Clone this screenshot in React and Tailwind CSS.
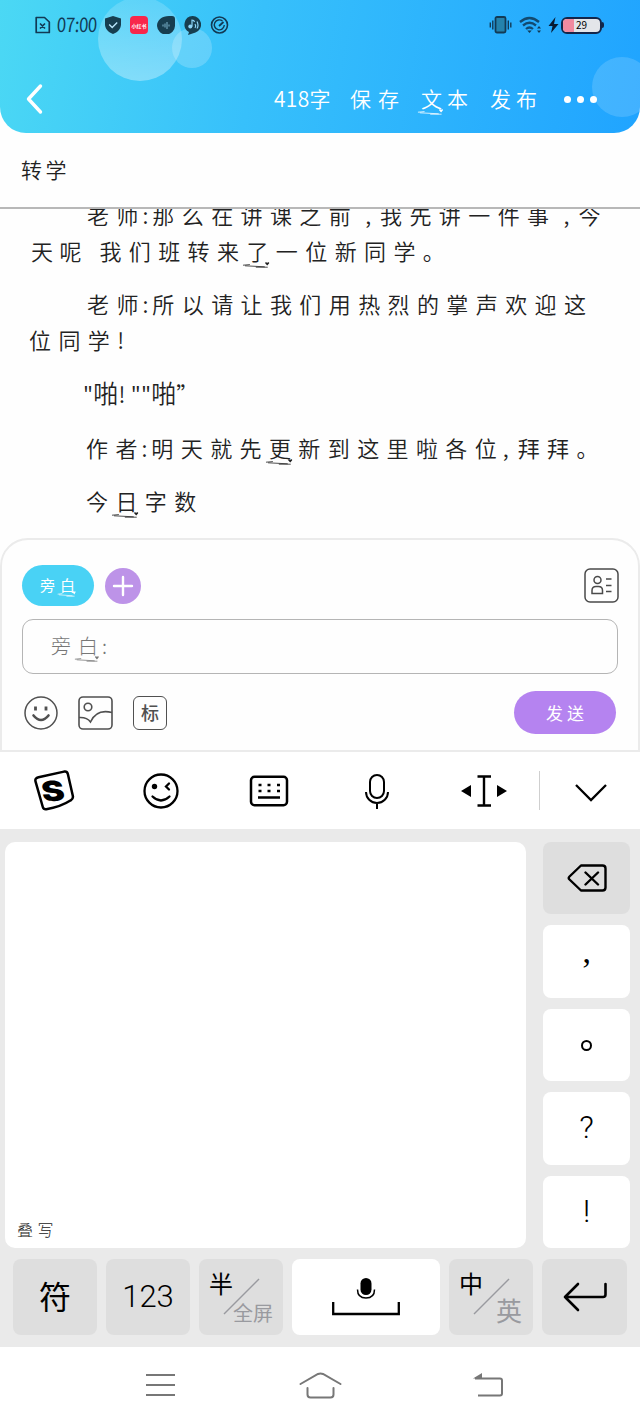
import React from 'react';

// little hand-drawn underline with a heart that some characters carry
const Marked = ({ children }) => (
    <span className="relative">
        {children}
        <svg className="absolute left-[-0.2em] bottom-[-2px] h-[8px] w-[1.35em]" viewBox="0 0 30 8" preserveAspectRatio="none" fill="none" stroke="currentColor">
            <path d="M1 5.2 8 4.6M3 5.8l20 1M14 7.2h12" strokeWidth="0.8" />
            <path d="M25.5 5.5 23.6 3.6c-.8-1.2.8-2 1.9-.8 1-1.2 2.6-.4 1.8.8z" fill="currentColor" stroke="none" />
        </svg>
    </span>
);

const StatusBar = () => (
    <div className="flex h-[50px] items-center justify-between pl-[35px] pr-[36px] text-[#123a55]">
        <div className="flex items-center">
            <svg className="mr-[6px] h-[20px] w-[16px]" viewBox="0 0 16 20" fill="none" stroke="currentColor" strokeWidth="1.7">
                <path d="M1.2 2.5h8.3L14.3 7v10.5H1.2zM5 8.5l5 5M10 8.5l-5 5" strokeLinejoin="round" />
            </svg>
            <span className="relative -top-[1px] w-[41px] -skew-x-3 text-[20px] leading-none tracking-[-0.500px] whitespace-nowrap"><span className="inline-block origin-left scale-x-[0.84]">07:00</span></span>
            <svg className="ml-[7px] h-[18px] w-[16px]" viewBox="0 0 16 18">
                <path d="M8 0l8 2.6v6C16 13 12.500 16.500 8 18 3.500 16.500 0 13 0 8.600v-6z" fill="#173e50" />
                <path d="M4.200 8.500l3 3 5-5" fill="none" stroke="#b9e5fa" strokeWidth="1.400" />
            </svg>
            <span className="ml-[9px] flex h-[18px] w-[18px] items-center justify-center rounded-[4px] bg-[#f8264a] text-[5px] leading-none font-bold whitespace-nowrap text-white">小红书</span>
            <svg className="ml-[9px] h-[18px] w-[18px]" viewBox="0 0 18 18">
                <path d="M0 10C0 4 5 0 12 0h3q3 0 3 3v6a9 9 0 0 1-18 1z" fill="#173e50" />
                <path d="M6 8.500v2M8 7.500v4M10 6v7M12 8.500v2" stroke="#7fb6cf" strokeWidth="1" />
            </svg>
            <svg className="ml-[9px] h-[19px] w-[17px]" viewBox="0 0 17 19">
                <path d="M8.500 0a8.500 8.500 0 0 1 3 16.500L4 19l1-3A8.500 8.500 0 0 1 8.500 0z" fill="#173e50" />
                <circle cx="6.300" cy="10.500" r="2" fill="#8ed5f8" />
                <path d="M8 10.500V4q2 0 2.500 2M11 8q1.500 2 0 4M13 5.500q2 4 0 7" fill="none" stroke="#8ed5f8" strokeWidth="1.200" />
            </svg>
            <svg className="ml-[9px] h-[18px] w-[19px]" viewBox="0 0 19 18" fill="none" stroke="currentColor">
                <circle cx="9.500" cy="9" r="8" strokeWidth="1.600" />
                <path d="M12.500 5A5 5 0 1 0 14.300 9" strokeWidth="1.400" />
                <path d="M9 10l4.500-4" strokeWidth="1.800" />
            </svg>
        </div>
        <div className="flex items-center">
            <svg className="h-[18px] w-[23px]" viewBox="0 0 23 18" fill="none" stroke="currentColor" strokeWidth="1.400">
                <rect x="6.500" y="1" width="10" height="15.500" rx="1.500" fill="#2482ac" strokeWidth="1.800" />
                <path d="M3.800 4.500v9M1.300 6.500v5M19.300 4.500v9M21.800 6.500v5" />
            </svg>
            <svg className="ml-[7px] h-[18px] w-[23px]" viewBox="0 0 23 18" fill="none" stroke="#124a70" strokeWidth="2.300">
                <path d="M1 6q9.500-8 19 0M4 9.500q6.500-5.500 13 0M7 13q3.500-3 7 0" />
                <path d="M8.300 14.500h4.400L10.500 17z" fill="currentColor" stroke="none" />
                <path d="M18 12.500h4l-2-2.500zM18 14.500h4L20 17z" fill="currentColor" stroke="none" />
            </svg>
            <svg className="ml-[6px] h-[18px] w-[11px]" viewBox="0 0 11 18" fill="#071a33">
                <path d="M7.500 1L.5 10h4L3 17l7.500-9H6z" />
            </svg>
            <div className="ml-[2px] flex items-center">
                <div className="relative flex h-[17px] w-[41px] items-center justify-center overflow-hidden rounded-[6px] border-2 border-[#13264a] bg-[#e3e5e9]">
                    <div className="absolute inset-y-0 left-0 w-[11px] bg-[#f08aa0]" />
                    <span className="relative text-[10px] leading-none text-black">29</span>
                </div>
                <div className="h-[6px] w-[2px] rounded-r bg-[#13264a]" />
            </div>
        </div>
    </div>
);

const Header = () => (
    <header className="relative h-[133px] overflow-hidden rounded-b-[26px] bg-[linear-gradient(100deg,#4bd8f4_0%,#37c0fb_40%,#20a4ff_100%)]">
        <div className="absolute top-[-3px] left-[98px] h-[84px] w-[84px] rounded-full bg-linear-to-b from-white/15 to-white/35" />
        <div className="absolute top-[28px] left-[172px] h-[40px] w-[40px] rounded-full bg-white/20" />
        <div className="absolute top-[57px] left-[592px] h-[60px] w-[60px] rounded-full bg-white/15" />
        <div className="relative">
            <StatusBar />
            <div className="flex h-[98px] items-center pl-[26px] text-[21px] text-white">
                <svg className="h-[32px] w-[18px]" viewBox="0 0 18 32" fill="none" stroke="white" strokeWidth="3.400" strokeLinecap="round" strokeLinejoin="round">
                    <path d="M14.500 3L2.500 16l12 13" />
                </svg>
                <nav className="ml-[230px] flex items-center font-[350] whitespace-nowrap">
                    <span className="w-[76px] tracking-[0.300px]">418字</span>
                    <span className="w-[71px] tracking-[7px]">保存</span>
                    <span className="w-[69px] tracking-[5px]"><Marked>文</Marked>本</span>
                    <span className="w-[74px] tracking-[5px]">发布</span>
                </nav>
                <div className="flex gap-[6px]">
                    <i className="h-[7px] w-[7px] rounded-full bg-white" />
                    <i className="h-[7px] w-[7px] rounded-full bg-white" />
                    <i className="h-[7px] w-[7px] rounded-full bg-white" />
                </div>
            </div>
        </div>
    </header>
);

const Comma = () => <span className="pl-[7px] tracking-[9px]">,</span>;
// last character of a speaker's name with its colon, set tighter than the line
const Tight = ({ children }) => <span className="tracking-[4px]">{children}</span>;

const Story = () => (
    <section className="h-[329px] overflow-hidden pl-[31px] text-[22px] leading-[36px] font-[350] tracking-[7.400px] whitespace-nowrap text-[#222]">
        <div className="-mt-[13px]">
            <p className="pl-[56px]">老<Tight>师:</Tight>那么在讲课之前<Comma />我先讲一件事<Comma />今</p>
            <p><span className="tracking-[6.500px]">天呢 </span>我们班转来<Marked>了</Marked>一位新同学。</p>
        </div>
        <div className="mt-[17px]">
            <p className="pl-[56px]">老<Tight>师:</Tight>所以请让我们用热烈的掌声欢迎这</p>
            <p className="-ml-[2px]">位同学!</p>
        </div>
        <p className="mt-[17px] pl-[52px] tracking-[0.200px]">"<span className="text-[25px]">啪</span>! ""<span className="text-[25px]">啪</span>”</p>
        <p className="mt-[18px] pl-[55px]">作<Tight>者:</Tight>明天就先<Marked>更</Marked>新到这里啦各<span className="tracking-[6px]">位</span><span className="tracking-[9px]">,</span>拜拜。</p>
        <p className="mt-[17px] pl-[55px]">今<Marked>日</Marked>字数</p>
    </section>
);

const Composer = () => (
    <section className="h-[214px] rounded-t-[28px] border-2 border-[#ebebeb] px-[20px] pt-[25px]">
        <div className="flex items-center justify-between">
            <div className="flex items-center gap-[11px]">
                <button className="h-[41px] w-[72px] rounded-full bg-[#49d2f5] pl-[4px] text-[15px] tracking-[5px] text-white">旁<Marked>白</Marked></button>
                <button className="flex h-[36px] w-[36px] items-center justify-center rounded-full bg-[#bd93e8]">
                    <svg className="h-[22px] w-[22px]" viewBox="0 0 22 22" stroke="white" strokeWidth="2.400" strokeLinecap="round"><path d="M11 2v18M2 11h18" /></svg>
                </button>
            </div>
            <svg className="-mr-[1px] h-[35px] w-[35px]" viewBox="0 0 35 35" fill="none" stroke="#4a4a4a" strokeWidth="1.500">
                <rect x="1" y="1" width="33" height="33" rx="5" />
                <circle cx="13.500" cy="12" r="3.500" />
                <path d="M8 25.500v-3q0-4 4-4h2.500q4 0 4 4v3zM22 11h5.500M22 17.500h5.500M22 23.500h5.500" />
            </svg>
        </div>
        <div className="mt-[13px] flex h-[55px] items-center rounded-[11px] border border-[#b5b5b5] pb-[2px] pl-[28px] text-[20px] font-light tracking-[7px] text-[#777]">旁<span className="tracking-[4px]"><Marked>白</Marked></span>:</div>
        <div className="mt-[17px] flex items-center">
            <svg className="ml-[2px] h-[34px] w-[34px]" viewBox="0 0 34 34" fill="none" stroke="#505050" strokeWidth="1.500">
                <circle cx="17" cy="17" r="16" />
                <path d="M11.500 10.500v4M22 10.500v4" strokeWidth="2.800" />
                <path d="M9.500 19.500q7.500 9 15 0" strokeWidth="2.600" strokeLinecap="round" />
            </svg>
            <svg className="ml-[20px] h-[34px] w-[35px]" viewBox="0 0 35 34" fill="none" stroke="#505050" strokeWidth="1.600">
                <rect x="1" y="1" width="33" height="32" rx="4" />
                <circle cx="10" cy="11" r="3.800" />
                <path d="M1 21.500q8-.5 11.500 4.500 6-13.500 21.500-9.500" />
            </svg>
            <span className="ml-[20px] flex h-[34px] w-[34px] items-center justify-center rounded-[6px] border-[1.500px] border-[#505050] pb-[2px] text-[18px] leading-none font-medium text-[#505050]">标</span>
            <button className="mr-[2px] ml-auto h-[43px] w-[102px] rounded-full bg-[#b583f0] pl-[4px] text-[17px] tracking-[4px] text-white">发送</button>
        </div>
    </section>
);

const InputToolbar = () => (
    <div className="flex h-[77px] items-center bg-white">
        <div className="grid w-[538px] grid-cols-5 items-center justify-items-center">
            <svg className="h-[42px] w-[42px]" viewBox="0 0 42 42">
                <path d="M5.500 7.300L31 1.600q3-.6 3.800 2.200l5 22q.7 3-2 4.500-10 6.500-24.500 9-2.700.4-3.500-2.300L2.500 11.300q-.8-3 3-4z" fill="none" stroke="black" strokeWidth="2.500" />
                <text x="0" y="0" transform="translate(21.500 31) rotate(-4) skewX(6) scale(1.220 1)" textAnchor="middle" fontFamily="Inter" fontWeight="900" fontSize="28">S</text>
            </svg>
            <svg className="h-[36px] w-[36px]" viewBox="0 0 36 36" fill="none" stroke="black" strokeWidth="2.300" strokeLinecap="round">
                <circle cx="18" cy="18" r="16.500" />
                <circle cx="11.500" cy="13.500" r="2.700" fill="black" stroke="none" />
                <path d="M26 10.500l-3 3 3 3M9.500 23.500q8.500 8 17 0" />
            </svg>
            <svg className="h-[32px] w-[40px]" viewBox="0 0 40 32" fill="none" stroke="black" strokeWidth="2.500">
                <rect x="2" y="1.800" width="36" height="28.400" rx="3.500" />
                <path d="M9.500 10h3M18.500 10h3M28 10h3M9.500 16h3M18.500 16h3M28 16h3M9 22.500h22" />
            </svg>
            <svg className="h-[36px] w-[26px]" viewBox="0 0 26 36" fill="none" stroke="black" strokeWidth="2">
                <rect x="6" y="2" width="14" height="23" rx="7" />
                <path d="M2 19a11 11 0 0 0 22 0M13 30v6" />
            </svg>
            <svg className="h-[32px] w-[46px]" viewBox="0 0 46 32">
                <path d="M0 16l10-6v12zM46 16l-10-6v12z" />
                <path d="M16.500 1.500h13.500M16.500 30.500h13.500M23 1.500v29" stroke="black" strokeWidth="2.400" />
            </svg>
        </div>
        <div className="ml-px h-[39px] w-px bg-[#cfcfcf]" />
        <svg className="ml-[35px] mt-[4px] h-[18px] w-[32px]" viewBox="0 0 32 18" fill="none" stroke="black" strokeWidth="2.300">
            <path d="M1 1l15 15L31 1" />
        </svg>
    </div>
);

const sideKeys = [
    { label: '’', className: "pt-[16px] font-['Liberation_Serif'] text-[34px]" },
    { label: '○', className: '' },
    { label: '?', className: 'pb-[2px] font-[350] text-[32px]' },
    { label: '!', className: 'pb-[2px] font-[350] text-[32px]' },
];

const SplitKey = ({ top, bottom }) => (
    <div className="relative h-[76px] w-[84px] rounded-[8px] bg-[#dedede]">
        <svg className="absolute top-[19px] left-[24px] h-[37px] w-[37px]" viewBox="0 0 37 37" stroke="#999a9f" strokeWidth="1.500"><path d="M1 36L36 1" /></svg>
        <span className="absolute top-[12px] left-[10px] text-[24px] leading-none">{top}</span>
        <span className={bottom.length > 1 ? 'absolute right-[10px] bottom-[12px] text-[20px] leading-none text-[#999a9f]' : 'absolute right-[11px] bottom-[12px] text-[26px] leading-none text-[#999a9f]'}>{bottom}</span>
    </div>
);

const Keyboard = () => (
    <div className="h-[518px] bg-[#eaeaea] pt-[13px]">
        <div className="flex h-[406px] gap-[17px] pl-[5px]">
            <div className="flex w-[521px] items-end rounded-[10px] bg-white pb-[9px] pl-[12px] text-[16px] leading-[20px] font-light tracking-[4.500px] text-[#222]">叠写</div>
            <div className="flex w-[87px] flex-col gap-[11px]">
                <div className="flex flex-1 items-center justify-center rounded-[8px] bg-[#dedede]">
                    <svg className="h-[28px] w-[40px]" viewBox="0 0 40 28" fill="none" stroke="black" strokeWidth="2.400" strokeLinejoin="round" strokeLinecap="round">
                        <path d="M14 1.500h21.500q3 0 3 3v19q0 3-3 3H14L2.500 15.500q-1.500-1.500 0-3zM18.500 8.500L31 20.500M31 8.500L18.500 20.500" />
                    </svg>
                </div>
                {sideKeys.map((key) => (
                    <div key={key.label} className="flex flex-1 items-center justify-center rounded-[8px] bg-white font-[Roboto,sans-serif]">
                        {key.label === '○'
                            ? <i className="h-[11px] w-[11px] rounded-full border-2 border-black" />
                            : <span className={key.className + ' leading-none'}>{key.label}</span>}
                    </div>
                ))}
            </div>
        </div>
        <div className="mt-[11px] flex gap-[9px] pl-[13px]">
            <div className="flex h-[76px] w-[84px] items-center justify-center rounded-[8px] bg-[#dedede] pb-[4px] text-[32px]">符</div>
            <div className="flex h-[76px] w-[84px] items-center justify-center rounded-[8px] bg-[#dedede] font-[Roboto,sans-serif] text-[31px] font-[350]">123</div>
            <SplitKey top="半" bottom="全屏" />
            <div className="flex h-[76px] w-[148px] justify-center rounded-[8px] bg-white pt-[18px]">
                <svg className="h-[40px] w-[68px]" viewBox="0 0 68 40" fill="none" stroke="black" strokeWidth="2">
                    <rect x="28.500" y="1" width="11" height="17" rx="5.500" fill="black" stroke="none" />
                    <path d="M25.500 12.500q0 8.500 8.500 8.500t8.500-8.500" strokeWidth="1.500" />
                    <path d="M1.200 25v12h65.600V25" strokeWidth="2.300" />
                </svg>
            </div>
            <SplitKey top="中" bottom="英" />
            <div className="flex h-[76px] w-[85px] items-center justify-center rounded-[8px] bg-[#dedede]">
                <svg className="h-[30px] w-[44px]" viewBox="0 0 44 30" fill="none" stroke="black" strokeWidth="2.600" strokeLinecap="round" strokeLinejoin="round">
                    <path d="M15 2L2 15l13 13M2 15h38q2.500 0 2.500-2.500V2" />
                </svg>
            </div>
        </div>
    </div>
);

const NavBar = () => (
    <div className="flex h-[75px] items-center bg-white pl-[145px] text-[#777]">
        <svg className="h-[24px] w-[30px]" viewBox="0 0 30 24" stroke="currentColor" strokeWidth="2"><path d="M1 2h29M1 12h29M1 22h29" /></svg>
        <svg className="ml-[124px] h-[28px] w-[43px]" viewBox="0 0 43 28" fill="none" stroke="currentColor" strokeWidth="2" strokeLinecap="round">
            <path d="M1.500 13L19 3q2.500-1 5 0l17.500 10M8.500 17v6.500q0 3 3 3h20q3 0 3-3V17" />
        </svg>
        <svg className="ml-[131px] h-[26px] w-[31px]" viewBox="0 0 31 26" fill="none" stroke="currentColor" strokeWidth="2">
            <path d="M2 6.500h25q2 0 2 2v13q0 2-2 2H5" /><path d="M0 6.500L9 1v5.500z" fill="currentColor" stroke="none" />
        </svg>
    </div>
);

const App = () => (
    <div className="flex h-[1422px] w-[640px] flex-col overflow-hidden bg-[#fefefe] font-['Noto_Sans_CJK_SC',sans-serif] text-black">
        <Header />
        <div className="flex h-[76px] shrink-0 items-center border-b-2 border-[#b8b8b8] pl-[21px] text-[21px] font-[350] tracking-[3.500px] text-[#222]">转学</div>
        <Story />
        <Composer />
        <InputToolbar />
        <Keyboard />
        <NavBar />
    </div>
);

export default App;
